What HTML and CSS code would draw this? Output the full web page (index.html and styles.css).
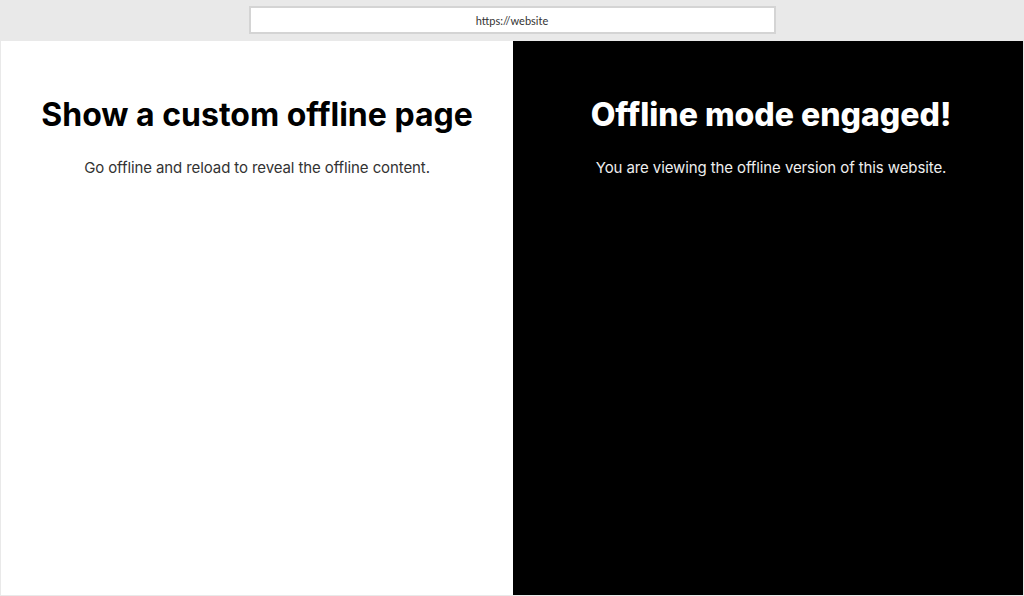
FILE: index.html
```html
<!DOCTYPE html>
<html>
<head>
<meta charset="utf-8">
<link rel="stylesheet" href="styles.css">
</head>
<body>
<div class="frame">
  <div class="topbar">
    <div class="url">https://website</div>
  </div>
  <div class="panes">
    <section class="pane light">
      <h1>Show a custom offline page</h1>
      <p>Go offline and reload to reveal the offline content.</p>
    </section>
    <section class="pane dark">
      <h1>Offline mode engaged!</h1>
      <p>You are viewing the offline version of this website.</p>
    </section>
  </div>
</div>
</body>
</html>
```
FILE: styles.css
```css
html, body {
  margin: 0;
  padding: 0;
  width: 1024px;
  height: 596px;
  overflow: hidden;
  background: #e9e9e9;
}
.frame {
  display: flex;
  flex-direction: column;
  height: 596px;
  padding: 0 1px 1px 1px;
  box-sizing: border-box;
}
.topbar {
  height: 41px;
  display: flex;
  justify-content: center;
  padding-top: 6px;
  box-sizing: border-box;
}
.url {
  width: 527px;
  height: 28px;
  box-sizing: border-box;
  background: #fff;
  border: 2px solid #d4d4d4;
  font-family: Lato, "Open Sans", sans-serif;
  font-size: 11px;
  color: #333;
  display: flex;
  align-items: center;
  justify-content: center;
}
.panes {
  flex: 1;
  display: flex;
}
.pane {
  text-align: center;
  font-family: Inter, "Noto Sans", sans-serif;
  padding-top: 54px;
}
.light {
  flex: 0 0 512px;
  background: #fff;
  color: #000;
}
.dark {
  flex: 1;
  padding-left: 6px;
  background: #000;
  color: #fff;
}
.pane h1 {
  margin: 0;
  font-size: 32px;
  font-weight: 700;
  line-height: 40px;
  letter-spacing: 0;
}
.dark h1 {
  font-weight: 800;
}
.pane p {
  margin: 21px 0 0;
  font-size: 15px;
  line-height: 24px;
  letter-spacing: -0.1px;
}
.light p { color: #333; }
.dark p { color: #eee; }
```
